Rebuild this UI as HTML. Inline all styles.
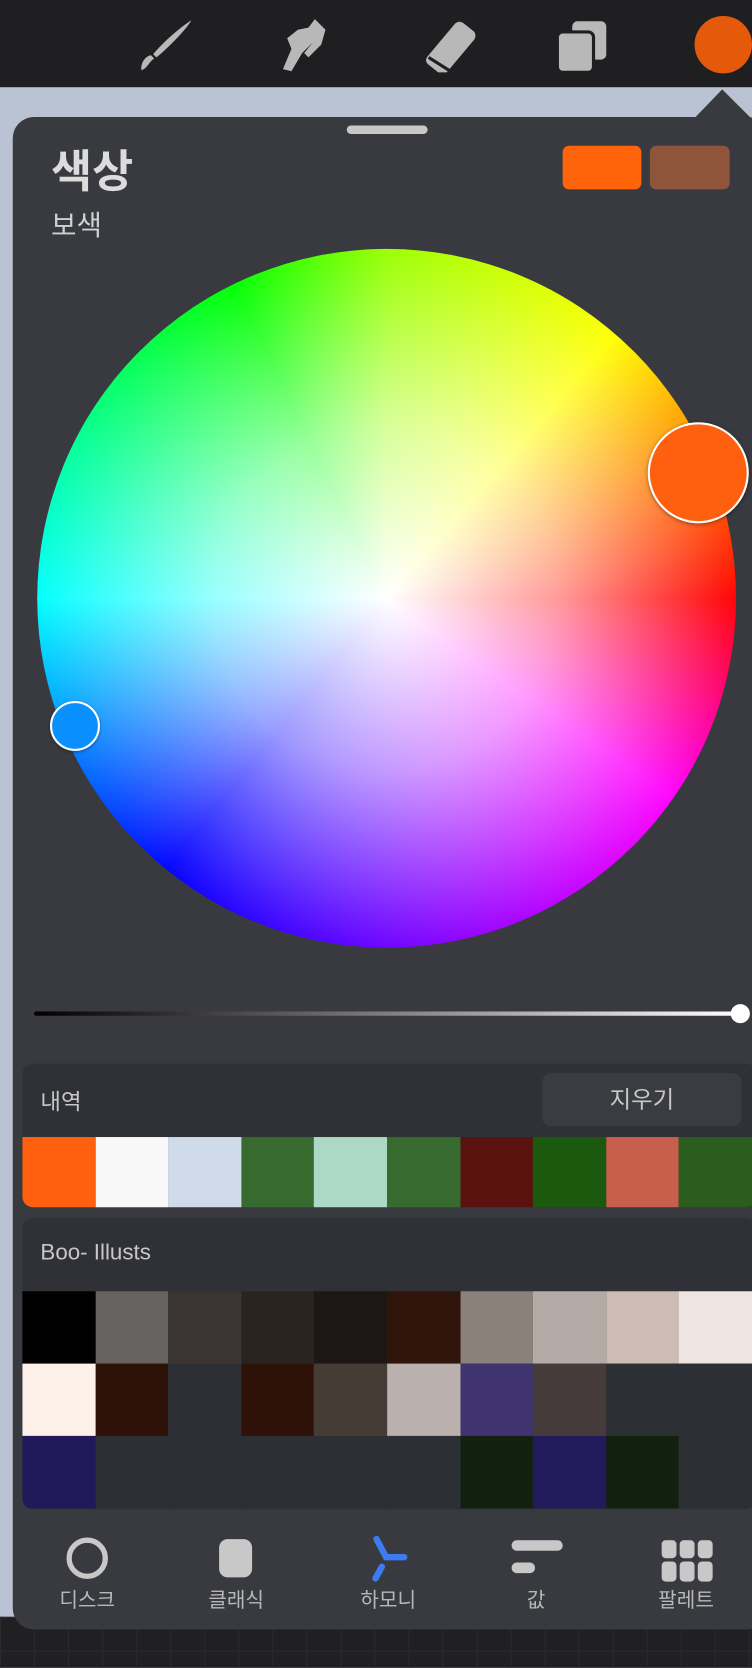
<!DOCTYPE html>
<html><head><meta charset="utf-8"><style>
html,body{margin:0;padding:0;width:752px;height:1668px;overflow:hidden;background:#b9c3d3;}
#w{position:absolute;left:0;top:0;width:707px;height:1568px;transform:scale(1.06365);transform-origin:0 0;font-family:"Liberation Sans","Noto Sans CJK KR",sans-serif;}
.a{position:absolute;}
.top{left:0;top:0;width:707px;height:82px;background:#1f1f21;}
.bot{left:0;top:1520px;width:707px;height:48px;background:#202022;
background-image:linear-gradient(90deg,#2a2a2c 1px,transparent 1px),linear-gradient(#2a2a2c 1px,transparent 1px);background-size:32px 32px;}
.panel{left:12px;top:110px;width:710px;height:1422px;background:#383a3f;border-radius:20px;}
.sec{background:#2f3136;border-radius:10px;overflow:hidden;}
.row{display:flex;}
.row div{flex:1;height:68px;}
.lbl{color:#c8c8c8;}
.tab{top:1490px;width:100px;text-align:center;color:#b8b8b8;font-size:19px;}
</style></head><body><div id="w">
<div class="a top"></div>
<!-- brush -->
<svg class="a" style="left:125px;top:18px" width="60" height="50" viewBox="0 0 60 50"><path d="M55 1 C50 10 32 28 22 36 L19 33 C28 22 45 7 55 1Z M20 37 C15 40 14 46 8 48 C7 42 11 35 17 34Z" fill="#b8b8b8"/></svg>
<!-- smudge -->
<svg class="a" style="left:260px;top:16px" width="50" height="54" viewBox="0 0 50 54"><path d="M36 2 L46 12 L42 26 L30 38 L26 34 L34 24 L24 34 L14 51 L6 49 L14 30 L10 20 L20 12 L30 10Z" fill="#b8b8b8"/></svg>
<!-- eraser -->
<svg class="a" style="left:390px;top:18px" width="60" height="50" viewBox="0 0 60 50"><path d="M38 4 Q42 1 46 4 L56 12 Q58 16 56 19 L30 50 Q26 53 22 50 L12 42 Q9 39 12 35Z" fill="#b8b8b8"/><path d="M13 36 L32 48" stroke="#1f1f21" stroke-width="3"/></svg>
<!-- layers -->
<svg class="a" style="left:522px;top:18px" width="52" height="52" viewBox="0 0 52 52"><rect x="16" y="2" width="32" height="36" rx="5" fill="#b8b8b8"/><rect x="2" y="12" width="34" height="38" rx="5" fill="#b8b8b8" stroke="#1f1f21" stroke-width="3"/></svg>
<div class="a" style="left:653px;top:15px;width:54px;height:54px;border-radius:50%;background:#e45a0a"></div>
<svg class="a" style="left:652px;top:84px" width="55" height="30"><path d="M27 0 L55 28 L0 28Z" fill="#383a3f"/></svg>
<div class="a bot"></div>
<div class="a panel"></div>
<div class="a" style="left:326px;top:118px;width:76px;height:8px;border-radius:4px;background:#c8c8c8"></div>
<div class="a" style="left:48px;top:128px;font-size:42px;font-weight:bold;color:#dcdcdc">색상</div>
<div class="a" style="left:48px;top:192px;font-size:26px;color:#d0d0d0">보색</div>
<div class="a" style="left:529px;top:137px;width:74px;height:41px;border-radius:6px;background:#ff640a"></div>
<div class="a" style="left:611px;top:137px;width:75px;height:41px;border-radius:6px;background:#8e553a"></div>
<!-- wheel -->
<div class="a" style="left:35px;top:234px;width:657px;height:657px;border-radius:50%;background:conic-gradient(from 0deg,#9f0 0deg,#ff0 41deg,#f00 90deg,#f0f 125deg,#80f 170deg,#00f 219deg,#0ff 270deg,#0f0 334deg,#9f0 360deg)"></div>
<div class="a" style="left:35px;top:234px;width:657px;height:657px;border-radius:50%;background:radial-gradient(circle,rgba(255,255,255,1) 0%,rgba(255,255,255,.6) 35%,rgba(255,255,255,0) 72%)"></div>
<div class="a" style="left:609px;top:397px;width:91px;height:91px;border-radius:50%;background:#ff6010;border:2px solid #fff;box-shadow:0 1px 4px rgba(0,0,0,.4)"></div>
<div class="a" style="left:47px;top:659px;width:43px;height:43px;border-radius:50%;background:#0a8fff;border:2px solid #fff;box-shadow:0 1px 3px rgba(0,0,0,.4)"></div>
<div class="a" style="left:32px;top:951px;width:664px;height:4px;border-radius:2px;background:linear-gradient(90deg,#000,#fff)"></div>
<div class="a" style="left:687px;top:944px;width:18px;height:18px;border-radius:50%;background:#fff"></div>
<!-- history -->
<div class="a sec" style="left:21px;top:1000px;width:690px;height:135px">
<div class="a lbl" style="left:17px;top:20px;font-size:21px">내역</div>
<div class="a" style="left:489px;top:9px;width:187px;height:50px;border-radius:8px;background:#3a3c41;color:#c8c8c8;font-size:22px;text-align:center;line-height:50px">지우기</div>
<div class="a row" style="left:0;top:69px;width:686px"><div style="background:#ff6010"></div><div style="background:#f8f8f8"></div><div style="background:#d0dbea"></div><div style="background:#376a2e"></div><div style="background:#acd9c5"></div><div style="background:#376a2e"></div><div style="background:#5a120f"></div><div style="background:#1b5a0e"></div><div style="background:#c85e4c"></div><div style="background:#2b5e1e"></div></div>
</div>
<div class="a sec" style="left:21px;top:1145px;width:690px;height:274px">
<div class="a lbl" style="left:17px;top:21px;font-size:21px">Boo- Illusts</div>
<div class="a" style="left:0;top:69px;width:686px">
<div class="row"><div style="background:#000"></div><div style="background:#66625f"></div><div style="background:#3a3533"></div><div style="background:#2a2421"></div><div style="background:#1c1714"></div><div style="background:#2f140a"></div><div style="background:#8a817b"></div><div style="background:#b5aba6"></div><div style="background:#cdbcb3"></div><div style="background:#efe5e0"></div></div>
<div class="row"><div style="background:#fdf1ea"></div><div style="background:#2e1208"></div><div style="background:#2c2f34"></div><div style="background:#2e1208"></div><div style="background:#453c36"></div><div style="background:#bab1ae"></div><div style="background:#3f3370"></div><div style="background:#463b3b"></div><div style="background:#2c2f34"></div><div style="background:#2c2f34"></div></div>
<div class="row"><div style="background:#21195a"></div><div style="background:#2c2f34"></div><div style="background:#2c2f34"></div><div style="background:#2c2f34"></div><div style="background:#2c2f34"></div><div style="background:#2c2f34"></div><div style="background:#11200f"></div><div style="background:#221a5a"></div><div style="background:#11200f"></div><div style="background:#2c2f34"></div></div>
</div></div>
<!-- tabs -->
<svg class="a" style="left:61px;top:1444px" width="42" height="42"><circle cx="21" cy="21" r="17" fill="none" stroke="#c8c8c8" stroke-width="5"/></svg>
<div class="a" style="left:206px;top:1447px;width:31px;height:36px;border-radius:8px;background:#c8c8c8"></div>
<svg class="a" style="left:340px;top:1442px" width="50" height="50"><g stroke="#3d7cf0" stroke-width="6" stroke-linecap="round" fill="none"><path d="M14 5 L23 22 L40 22"/><path d="M19 31 L13 42"/></g></svg>
<svg class="a" style="left:480px;top:1448px" width="52" height="40"><g stroke="#c8c8c8" stroke-width="10" stroke-linecap="round"><path d="M6 5 L44 5"/><path d="M6 26 L18 26"/></g></svg>
<svg class="a" style="left:622px;top:1448px" width="50" height="46"><g fill="#c8c8c8"><rect x="0" y="0" width="14" height="17" rx="4"/><rect x="17" y="0" width="14" height="17" rx="4"/><rect x="34" y="0" width="14" height="17" rx="4"/><rect x="0" y="20" width="14" height="19" rx="4"/><rect x="17" y="20" width="14" height="19" rx="4"/><rect x="34" y="20" width="14" height="19" rx="4"/></g></svg>
<div class="a tab" style="left:32px">디스크</div>
<div class="a tab" style="left:172px">클래식</div>
<div class="a tab" style="left:315px">하모니</div>
<div class="a tab" style="left:454px">값</div>
<div class="a tab" style="left:595px">팔레트</div>
</div></body></html>
